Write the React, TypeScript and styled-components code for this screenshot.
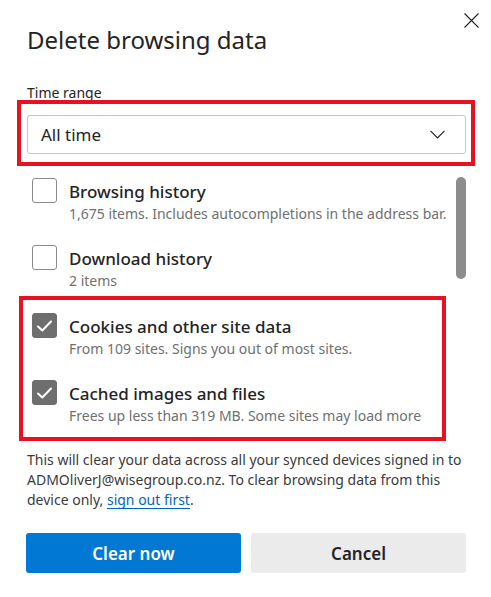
import React from "react";
import styled, { createGlobalStyle } from "styled-components";

const Global = createGlobalStyle`
  html, body { margin: 0; padding: 0; background: #ffffff; }
  body { font-family: "Noto Sans", "Open Sans", sans-serif; color: #1f1f1f; }
  * { box-sizing: border-box; }
`;

const Dialog = styled.div`
  width: 491px;
  height: 597px;
  background: #ffffff;
  padding: 0 25px 0 27px;
  display: flex;
  flex-direction: column;
`;

const CloseRow = styled.div`
  display: flex;
  justify-content: flex-end;
  padding-top: 12px;
  margin-right: -13px;
  height: 28px;
`;

const CloseButton = styled.button`
  width: 16px;
  height: 16px;
  padding: 0;
  border: none;
  background: none;
  display: flex;
  align-items: center;
  justify-content: center;
  cursor: pointer;
`;

const Title = styled.h1`
  margin: -4px 0 0;
  font-size: 24px;
  font-weight: 400;
  line-height: 32px;
  color: #242424;
`;

const Label = styled.div`
  margin-top: 28px;
  font-size: 14px;
  line-height: 18px;
  color: #242424;
`;

const Highlight = styled.div<{ $left: number; $width: number }>`
  margin-left: ${(p) => p.$left}px;
  width: ${(p) => p.$width}px;
  border: 4px solid #e81123;
`;

const SelectWrap = styled(Highlight)`
  margin-top: -2px;
  padding: 11px 5px 8px 6px;
`;

const Select = styled.div`
  height: 39px;
  border: 1px solid #c6c6c6;
  border-radius: 3px;
  display: flex;
  align-items: center;
  justify-content: space-between;
  padding: 0 20px 0 13px;
  font-size: 17px;
  color: #242424;
`;

const List = styled.div`
  position: relative;
  margin-top: 12px;
  height: 263px;
`;

const Thumb = styled.div`
  position: absolute;
  right: 0;
  top: -1px;
  width: 10px;
  height: 102px;
  border-radius: 5px;
  background: #8c8c8c;
`;

const Item = styled.label`
  display: flex;
  align-items: flex-start;
  gap: 12px;
  padding-left: 5px;
  height: 67px;
`;

const Box = styled.span<{ $checked?: boolean }>`
  flex: none;
  width: 25px;
  height: 25px;
  border-radius: 3px;
  border: 1px solid ${(p) => (p.$checked ? "#6e6e6e" : "#8a8a8a")};
  background: ${(p) => (p.$checked ? "#6e6e6e" : "#ffffff")};
  display: flex;
  align-items: center;
  justify-content: center;
`;

const ItemText = styled.div`
  display: flex;
  flex-direction: column;
`;

const ItemTitle = styled.div`
  font-size: 17px;
  font-weight: 500;
  line-height: 26px;
  color: #242424;
  margin-top: 1px;
`;

const ItemSub = styled.div`
  font-size: 14px;
  line-height: 18px;
  color: #707070;
  white-space: nowrap;
`;

const CheckedGroup = styled(Highlight)`
  margin-top: -16px;
  padding: 13px 0 0 9px;
  height: 145px;
`;

const CheckedItem = styled(Item)`
  padding-left: 0;
`;

const Note = styled.p`
  margin: 9px 0 0;
  font-size: 14px;
  line-height: 20px;
  color: #3b3b3b;
`;

const Link = styled.a`
  color: #0067c0;
  text-decoration: underline;
  text-underline-offset: 3px;
`;

const Buttons = styled.div`
  display: grid;
  grid-template-columns: 1fr 1fr;
  gap: 10px;
  margin-top: 23px;
  margin-left: -1px;
`;

const Button = styled.button<{ $primary?: boolean }>`
  height: 40px;
  border: none;
  border-radius: 3px;
  font-family: inherit;
  font-size: 17px;
  font-weight: 600;
  background: ${(p) => (p.$primary ? "#0078d4" : "#ebebeb")};
  color: ${(p) => (p.$primary ? "#ffffff" : "#242424")};
  cursor: pointer;
`;

const Check = () => (
  <svg width="17" height="14" viewBox="0 0 17 14">
    <path d="M2 7.5 L6.3 11.5 L15 2.5" fill="none" stroke="#ffffff" strokeWidth="2" strokeLinecap="round" strokeLinejoin="round" />
  </svg>
);

const Checkbox = ({ checked }: { checked?: boolean }) => (
  <Box $checked={checked}>{checked && <Check />}</Box>
);

export default function App() {
  return (
    <>
      <Global />
      <Dialog>
        <CloseRow>
          <CloseButton aria-label="Close">
            <svg width="15" height="15" viewBox="0 0 15 15">
              <path d="M0.5 0.5 L14.5 14.5 M14.5 0.5 L0.5 14.5" stroke="#242424" strokeWidth="1.1" />
            </svg>
          </CloseButton>
        </CloseRow>
        <Title>Delete browsing data</Title>
        <Label>Time range</Label>
        <SelectWrap $left={-10} $width={458}>
          <Select>
            <span>All time</span>
            <svg width="15" height="9" viewBox="0 0 15 9">
              <path d="M0.5 0.8 L7.5 7.8 L14.5 0.8" fill="none" stroke="#242424" strokeWidth="1.2" />
            </svg>
          </Select>
        </SelectWrap>
        <List>
          <Thumb />
          <Item>
            <Checkbox />
            <ItemText>
              <ItemTitle>Browsing history</ItemTitle>
              <ItemSub>1,675 items. Includes autocompletions in the address bar.</ItemSub>
            </ItemText>
          </Item>
          <Item>
            <Checkbox />
            <ItemText>
              <ItemTitle>Download history</ItemTitle>
              <ItemSub>2 items</ItemSub>
            </ItemText>
          </Item>
          <CheckedGroup $left={-8} $width={427}>
            <CheckedItem>
              <Checkbox checked />
              <ItemText>
                <ItemTitle>Cookies and other site data</ItemTitle>
                <ItemSub>From 109 sites. Signs you out of most sites.</ItemSub>
              </ItemText>
            </CheckedItem>
            <CheckedItem>
              <Checkbox checked />
              <ItemText>
                <ItemTitle>Cached images and files</ItemTitle>
                <ItemSub>Frees up less than 319 MB. Some sites may load more</ItemSub>
              </ItemText>
            </CheckedItem>
          </CheckedGroup>
        </List>
        <Note>
          This will clear your data across all your synced devices signed in to ADMOliverJ@wisegroup.co.nz. To clear
          browsing data from this device only, <Link href="#">sign out first</Link>.
        </Note>
        <Buttons>
          <Button $primary>Clear now</Button>
          <Button>Cancel</Button>
        </Buttons>
      </Dialog>
    </>
  );
}
